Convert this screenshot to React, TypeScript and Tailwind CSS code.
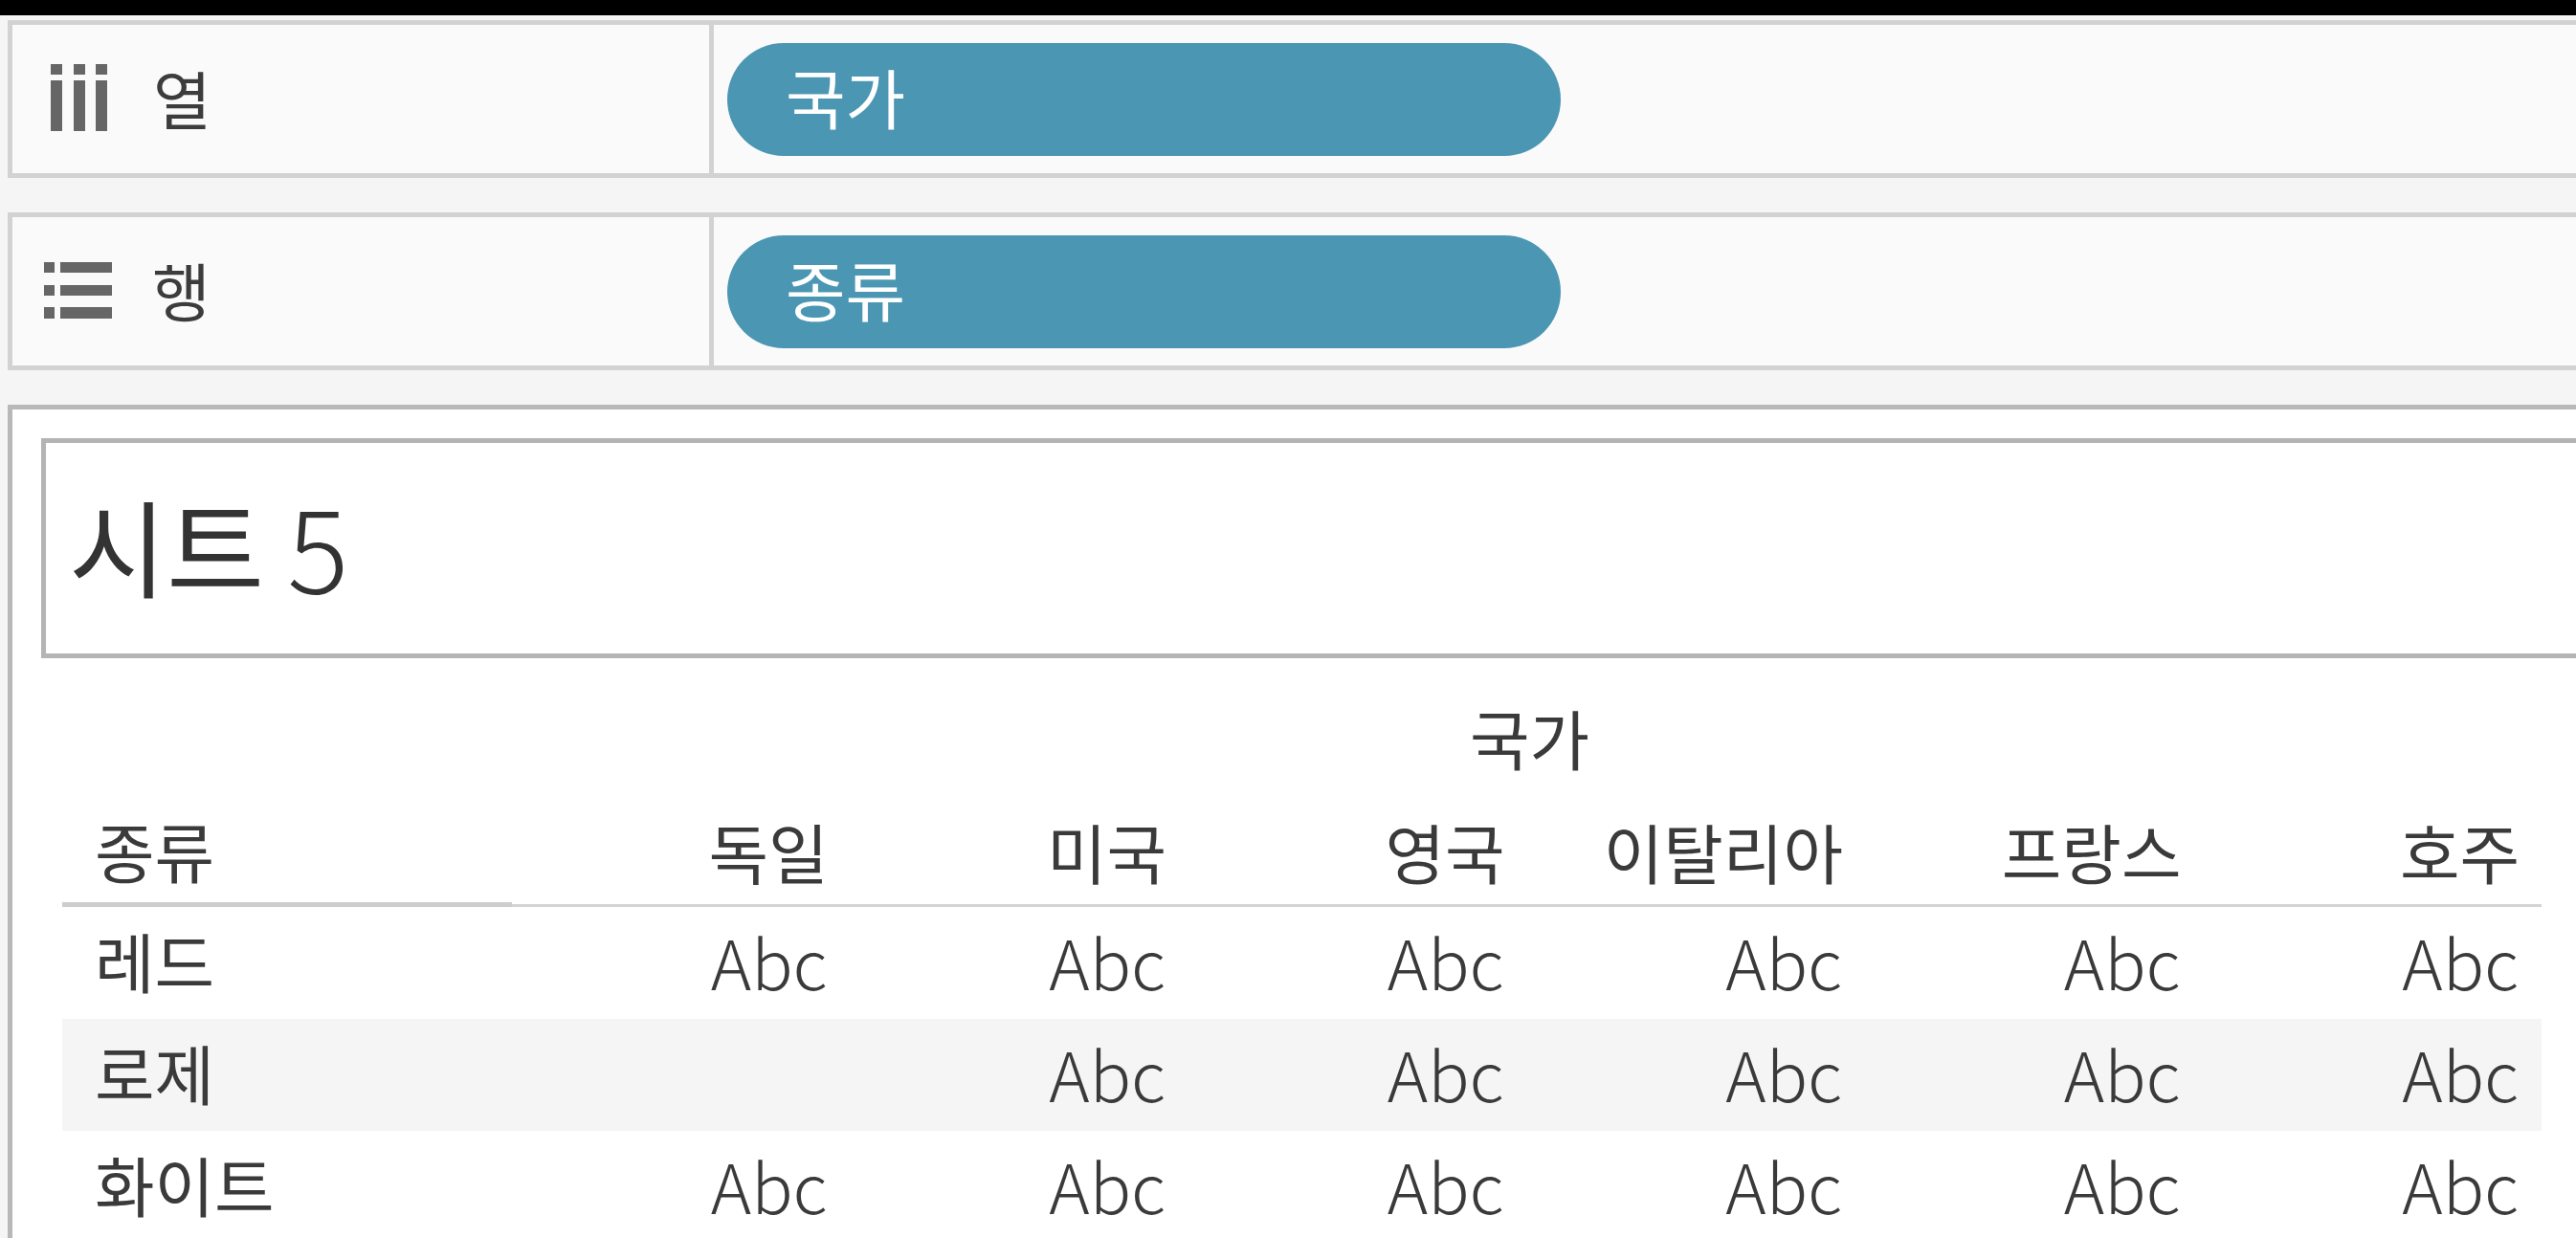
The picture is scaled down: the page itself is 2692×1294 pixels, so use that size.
const font = { fontFamily: '"Noto Sans CJK KR", "Noto Sans", sans-serif' };
const cols = ["독일", "미국", "영국", "이탈리아", "프랑스", "호주"];
const rows = [
  { name: "레드", cells: [1, 1, 1, 1, 1, 1], bg: "" },
  { name: "로제", cells: [0, 1, 1, 1, 1, 1], bg: "bg-[#f5f5f5]" },
  { name: "화이트", cells: [1, 1, 1, 1, 1, 1], bg: "" },
];

function ColumnsIcon() {
  return (
    <svg width="60" height="70" viewBox="0 0 60 70" fill="#666666" className="ml-[40px] mb-[3px]">
      <rect x="0" y="0" width="12" height="11" />
      <rect x="0" y="17" width="12" height="53" />
      <rect x="24" y="0" width="12" height="11" />
      <rect x="24" y="17" width="12" height="53" />
      <rect x="47" y="0" width="12" height="11" />
      <rect x="47" y="17" width="12" height="53" />
    </svg>
  );
}

function RowsIcon() {
  return (
    <svg width="71" height="59" viewBox="0 0 71 59" fill="#666666" className="ml-[33px] mb-[3px]">
      <rect x="0" y="0" width="11" height="11" />
      <rect x="17" y="0" width="54" height="11" />
      <rect x="0" y="24" width="11" height="11" />
      <rect x="17" y="24" width="54" height="11" />
      <rect x="0" y="47" width="11" height="12" />
      <rect x="17" y="47" width="54" height="12" />
    </svg>
  );
}

function Shelf({ icon, label, pill, gap }: { icon: React.ReactNode; label: string; pill: string; gap: string }) {
  return (
    <div className="ml-2 h-[165px] flex bg-[#fafafa] border-[5px] border-r-0 border-[#d2d2d2]">
      <div className="w-[733px] flex items-center border-r-[5px] border-[#d2d2d2]">
        {icon}
        <span className={`${gap} text-[66px] leading-none text-[#3c3c3c] pb-[5px]`}>{label}</span>
      </div>
      <div className="flex items-center pl-[14px]">
        <div className="w-[871px] h-[118px] rounded-full bg-[#4a96b3] pl-[61px] pb-[6px] flex items-center text-white text-[68px] leading-none">
          {pill}
        </div>
      </div>
    </div>
  );
}

export default function App() {
  return (
    <div className="w-[2692px] h-[1294px] overflow-hidden bg-[#f5f5f5] flex flex-col" style={font}>
      <div className="h-[16px] bg-black shrink-0" />
      <div className="pt-[5px] flex flex-col gap-[36px]">
        <Shelf icon={<ColumnsIcon />} label="열" pill="국가" gap="ml-[47px]" />
        <Shelf icon={<RowsIcon />} label="행" pill="종류" gap="ml-[42px]" />
      </div>
      <div className="ml-2 mt-[36px] flex-1 bg-white border-l-[5px] border-t-[5px] border-[#b8b8b8] pl-[30px] pt-[30px]">
        <div className="h-[230px] border-[5px] border-r-0 border-[#b4b4b4] flex items-center pl-[24px] pb-[10px] text-[#333333] text-[111px] leading-none">
          시트 <span className="font-light ml-[24px] text-[120px]">5</span>
        </div>
        <div className="ml-[22px] mr-[36px] text-[#3a3a3a] text-[68px] leading-none">
          <div className="pl-[476px] h-[167px] flex items-center justify-center pb-[2px]">국가</div>
          <div className="grid grid-cols-[470px_repeat(6,1fr)] h-[93px]">
            <div className="pl-[34px] pb-[20px] flex items-center border-b-[5px] border-[#cdcdcd]">종류</div>
            {cols.map((c) => (
              <div key={c} className="pr-[23px] pb-[20px] flex items-center justify-end border-b-[3px] border-[#d4d4d4] whitespace-nowrap">
                {c}
              </div>
            ))}
          </div>
          {rows.map((r) => (
            <div key={r.name} className={`grid grid-cols-[470px_repeat(6,1fr)] h-[117px] ${r.bg}`}>
              <div className="pl-[34px] pb-[6px] flex items-center">{r.name}</div>
              {r.cells.map((v, i) => (
                <div key={i} className="pr-[24px] pb-[6px] flex items-center justify-end font-light text-[72px]">
                  {v ? "Abc" : ""}
                </div>
              ))}
            </div>
          ))}
        </div>
      </div>
    </div>
  );
}
